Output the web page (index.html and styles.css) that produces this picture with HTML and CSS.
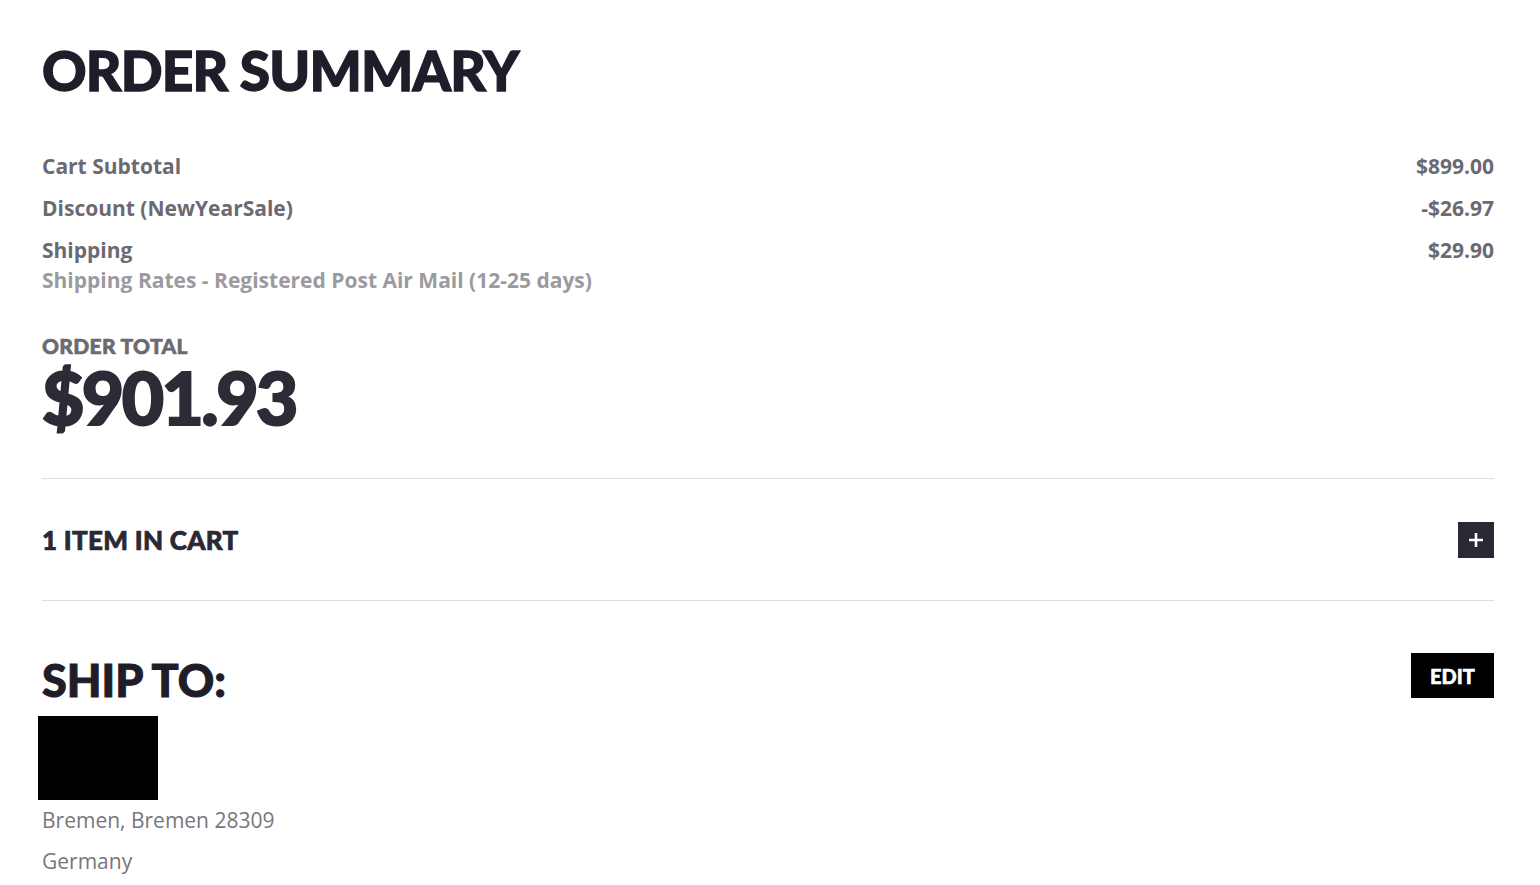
FILE: index.html
```html
<!DOCTYPE html>
<html>
<head>
<meta charset="utf-8">
<link rel="stylesheet" href="styles.css">
</head>
<body>
<div class="page">
  <h1 class="title">ORDER SUMMARY</h1>
  <div class="lines">
    <div class="line"><span>Cart Subtotal</span><span>$899.00</span></div>
    <div class="line"><span>Discount (NewYearSale)</span><span>-$26.97</span></div>
    <div class="line ship">
      <div class="ship-text"><span>Shipping</span><span class="sub">Shipping Rates - Registered Post Air Mail (12-25 days)</span></div>
      <span>$29.90</span>
    </div>
  </div>
  <div class="total">
    <div class="total-label">ORDER TOTAL</div>
    <div class="total-value">$901.93</div>
  </div>
  <div class="cart-row">
    <div class="cart-label">1 ITEM IN CART</div>
    <button class="plus" aria-label="Expand">
      <svg width="16" height="16" viewBox="0 0 16 16"><path d="M8 1v14M1 8h14" stroke="#fff" stroke-width="2.6"/></svg>
    </button>
  </div>
  <div class="ship-head">
    <h2 class="ship-title">SHIP TO:</h2>
    <button class="edit">EDIT</button>
  </div>
  <div class="redact"></div>
  <div class="addr">Bremen, Bremen 28309</div>
  <div class="addr">Germany</div>
</div>
</body>
</html>
```
FILE: styles.css
```css
html, body { margin: 0; padding: 0; background: #fff; }
body { overflow: hidden; }
.page {
  padding: 0 46px 0 42px;
  font-family: "Open Sans", "Liberation Sans", sans-serif;
  color: #6b6a72;
}
.title {
  font-family: Lato, "Liberation Sans", sans-serif;
  font-weight: 900;
  font-size: 55px;
  line-height: 1;
  margin: 0;
  padding-top: 43px;
  color: #1f1d29;
  letter-spacing: -0.8px;
  -webkit-text-stroke: 1.3px #1f1d29;
}
.lines { margin-top: 53px; }
.line {
  display: flex;
  justify-content: space-between;
  font-size: 21px;
  font-weight: 700;
  line-height: 30px;
  margin-bottom: 12px;
}
.ship-text { display: flex; flex-direction: column; }
.sub { color: #9b9a9f; }
.total { margin-top: 40px; }
.total-label {
  font-family: Lato, "Liberation Sans", sans-serif;
  font-weight: 900;
  font-size: 21px;
  line-height: 22px;
  color: #6b6a72;
  letter-spacing: 0.3px;
  -webkit-text-stroke: 0.6px #6b6a72;
}
.total-value {
  font-family: Lato, "Liberation Sans", sans-serif;
  font-weight: 900;
  font-size: 73px;
  line-height: 81px;
  color: #2d2b36;
  letter-spacing: -2.5px;
  -webkit-text-stroke: 2px #2d2b36;
}
.cart-row {
  margin-top: 40px;
  border-top: 1px solid #dcdcdc;
  border-bottom: 1px solid #dcdcdc;
  height: 121px;
  display: flex;
  align-items: center;
  justify-content: space-between;
}
.cart-label {
  font-family: Lato, "Liberation Sans", sans-serif;
  font-weight: 900;
  font-size: 26px;
  color: #2a2933;
  letter-spacing: 0.3px;
  -webkit-text-stroke: 0.7px #2a2933;
}
.plus {
  width: 36px; height: 36px;
  background: #2a2835;
  border: 0; padding: 0;
  display: flex; align-items: center; justify-content: center;
}
.ship-head {
  margin-top: 52px;
  display: flex;
  justify-content: space-between;
  align-items: flex-start;
}
.ship-title {
  font-family: Lato, "Liberation Sans", sans-serif;
  font-weight: 900;
  font-size: 45px;
  line-height: 1;
  margin: 0;
  padding-top: 5px;
  color: #1f1d29;
  -webkit-text-stroke: 1px #1f1d29;
}
.edit {
  background: #000;
  color: #fff;
  border: 0;
  width: 83px; height: 45px;
  font-family: Lato, "Liberation Sans", sans-serif;
  font-weight: 900;
  font-size: 20px;
  padding: 0;
  -webkit-text-stroke: 0.5px #fff;
}
.redact {
  width: 120px; height: 84px;
  background: #000;
  margin: 13px 0 0 -4px;
}
.addr {
  font-size: 21px;
  line-height: 40px;
  color: #77767d;
}
.addr + .addr { margin-top: 1px; }
```
